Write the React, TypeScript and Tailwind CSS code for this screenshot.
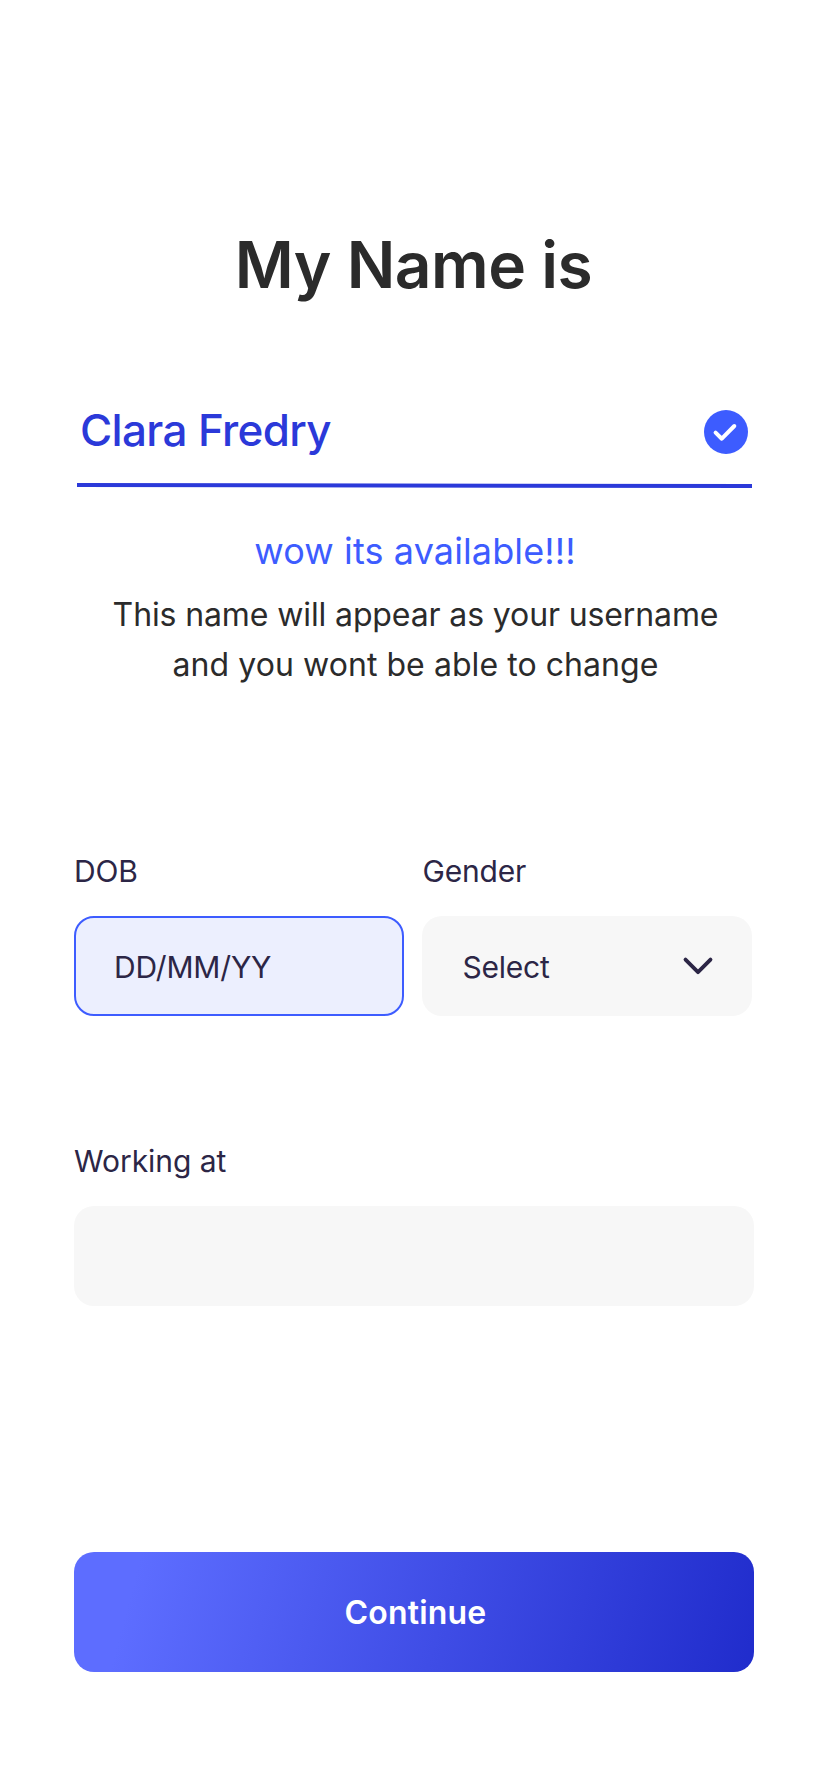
export default function App() {
  return (
    <main className="flex min-h-[1792px] w-[828px] flex-col bg-white px-[74px] pt-[225px] pb-[120px] font-['Inter',sans-serif] text-[#2b2b2b] antialiased">
      <h1 className="pr-px text-center text-[64px] leading-[80px] font-semibold tracking-[-0.45px]">My Name is</h1>

      <div className="mt-[105px] flex h-11 items-center justify-between pr-1.5 pl-1.5">
        <span className="pb-1 text-[44px] leading-[44px] font-medium tracking-[-0.66px] text-[#2b39d9]">Clara Fredry</span>
        <svg className="size-11" viewBox="0 0 44 44" fill="none">
          <circle cx="22" cy="22" r="22" fill="#3d5cff" />
          <path d="M11.6 22.6 17.8 28.7 30.3 16" stroke="#fff" strokeWidth="4" strokeLinecap="round" strokeLinejoin="round" />
        </svg>
      </div>
      <svg className="mt-[26px] ml-[3px] block h-2.5 w-[675px]" viewBox="0 0 675 10" fill="none">
        <path d="M0 5 675 6" stroke="#2b39d9" strokeWidth="4" />
      </svg>

      <p className="mt-[41px] pl-0.5 text-center text-[36px] leading-10 tracking-[0.12px] text-[#3d5cff]">wow its available!!!</p>
      <p className="mt-[19px] pl-[3px] text-center text-[32px] leading-[50px]">
        <span className="tracking-[-0.12px]">This name will appear as your username</span>
        <br />
        <span className="tracking-[0.06px]">and you wont be able to change</span>
      </p>

      <div className="mt-[163px] flex gap-[18px] text-[30px] leading-9 text-[#2c2646]">
        <div className="w-[330px]">
          <div className="tracking-[-0.15px]">DOB</div>
          <div className="mt-[27px] flex h-[100px] items-center rounded-[20px] border-2 border-[#3d5cff] bg-[#eceffe] pt-0.5 pl-[38px] tracking-[-0.17px]">
            DD/MM/YY
          </div>
        </div>
        <div className="w-[330px]">
          <div className="pl-[0.5px] tracking-[-0.2px]">Gender</div>
          <div className="mt-[27px] flex h-[100px] items-center justify-between rounded-[20px] bg-[#f7f7f7] pr-[38px] pl-10 tracking-[-0.25px]">
            <span className="pt-0.5 pl-[0.5px]">Select</span>
            <svg className="h-5 w-8" viewBox="0 0 32 20" fill="none">
              <path d="M3.5 3.6 16 16.2 28.5 3.6" stroke="#2c2646" strokeWidth="3.8" strokeLinecap="round" strokeLinejoin="round" />
            </svg>
          </div>
        </div>
      </div>

      <div className="mt-[127px] text-[30px] leading-9 tracking-[-0.05px] text-[#2c2646]">Working at</div>
      <div className="mt-[27px] h-[100px] rounded-[20px] bg-[#f7f7f7]" />

      <button className="mt-[246px] h-[120px] w-full rounded-[20px] bg-[linear-gradient(105deg,#5d6dff_9.5%,#202ccc_100%)] pt-0.5 pl-[3px] text-[32px] font-semibold tracking-[0.2px] text-white">
        Continue
      </button>
    </main>
  );
}
